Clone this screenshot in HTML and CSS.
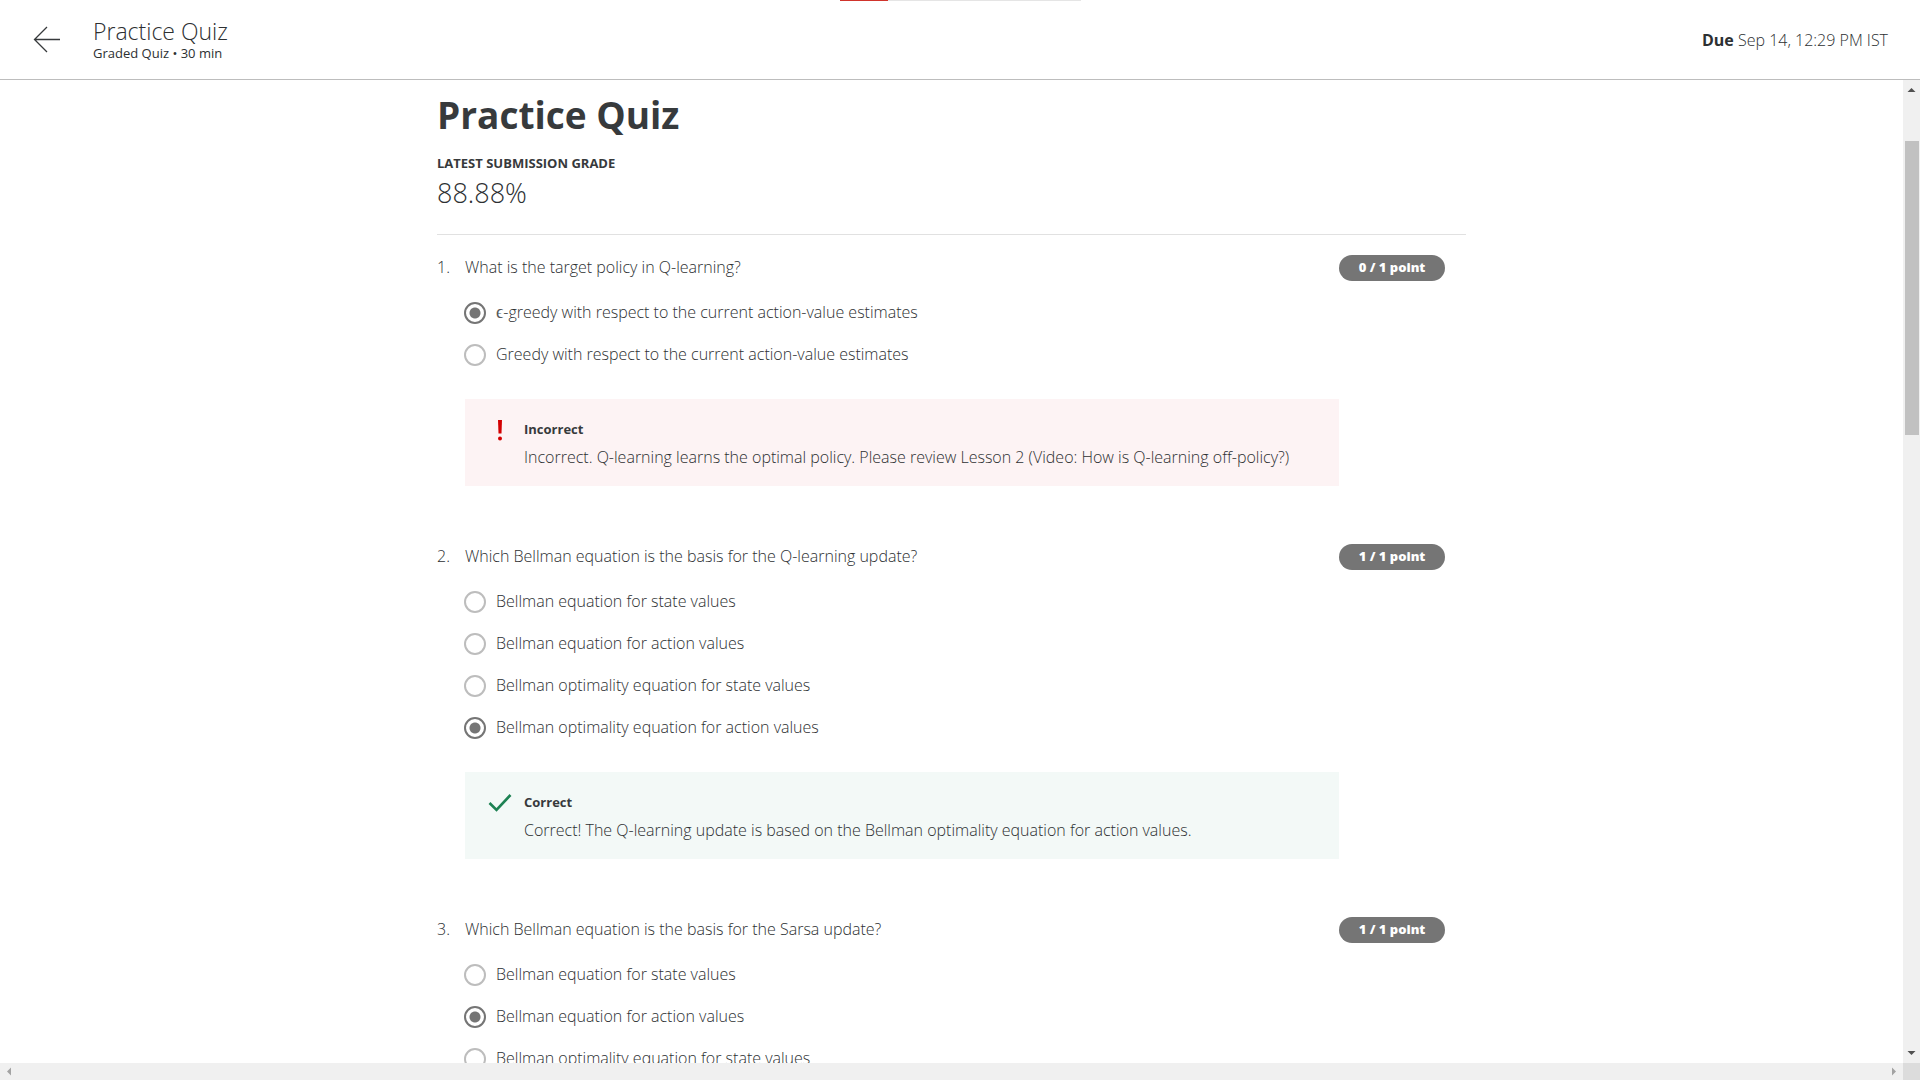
FILE: index.html
```html
<!DOCTYPE html>
<html lang="en">
<head>
<meta charset="utf-8">
<title>Practice Quiz</title>
<link rel="stylesheet" href="styles.css">
</head>
<body>
<div class="app">
  <header class="topbar">
    <a class="back" href="#" aria-label="Back">
      <svg width="28" height="28" viewBox="0 0 28 28" fill="none" stroke="#373a3c" stroke-width="1.3"><path d="M27 13.5H1.5M14 1L1.5 13.5L14 26"/></svg>
    </a>
    <div class="heading">
      <div class="name">Practice Quiz</div>
      <div class="kind">Graded Quiz • 30 min</div>
    </div>
    <div class="due"><strong>Due</strong> Sep 14, 12:29 PM IST</div>
    <div class="progress"><div class="progress-fill"></div></div>
  </header>

  <main class="pane">
    <div class="content">
      <h1>Practice Quiz</h1>
      <h2>Latest Submission Grade</h2>
      <p class="grade">88.88%</p>

      <section class="question">
        <div class="number">1.</div>
        <div class="body">
          <p class="prompt" id="q1">What is the target policy in Q-learning?</p>
          <div class="options" role="radiogroup" aria-labelledby="q1">
            <label class="option"><input type="radio" name="q1" checked><span><span class="math">ϵ</span>-greedy with respect to the current action-value estimates</span></label>
            <label class="option"><input type="radio" name="q1"><span>Greedy with respect to the current action-value estimates</span></label>
          </div>
          <div class="feedback incorrect">
            <svg class="mark" width="24" height="24" viewBox="0 0 24 24" fill="#d30001"><path d="M10 1h4l-.5 13.500h-3z"/><circle cx="12" cy="19.500" r="2"/></svg>
            <div>
              <h3>Incorrect</h3>
              <p>Incorrect. Q-learning learns the optimal policy. Please review Lesson 2 (Video: How is Q-learning off-policy?)</p>
            </div>
          </div>
        </div>
        <div class="points">0 / 1 point</div>
      </section>

      <section class="question">
        <div class="number">2.</div>
        <div class="body">
          <p class="prompt" id="q2">Which Bellman equation is the basis for the Q-learning update?</p>
          <div class="options" role="radiogroup" aria-labelledby="q2">
            <label class="option"><input type="radio" name="q2"><span>Bellman equation for state values</span></label>
            <label class="option"><input type="radio" name="q2"><span>Bellman equation for action values</span></label>
            <label class="option"><input type="radio" name="q2"><span>Bellman optimality equation for state values</span></label>
            <label class="option"><input type="radio" name="q2" checked><span>Bellman optimality equation for action values</span></label>
          </div>
          <div class="feedback correct">
            <svg class="mark" width="24" height="24" viewBox="0 0 24 24" fill="none" stroke="#1d8253" stroke-width="2.600"><path d="M1.500 11L8.500 18L22.500 3"/></svg>
            <div>
              <h3>Correct</h3>
              <p>Correct! The Q-learning update is based on the Bellman optimality equation for action values.</p>
            </div>
          </div>
        </div>
        <div class="points">1 / 1 point</div>
      </section>

      <section class="question">
        <div class="number">3.</div>
        <div class="body">
          <p class="prompt" id="q3">Which Bellman equation is the basis for the Sarsa update?</p>
          <div class="options" role="radiogroup" aria-labelledby="q3">
            <label class="option"><input type="radio" name="q3"><span>Bellman equation for state values</span></label>
            <label class="option"><input type="radio" name="q3" checked><span>Bellman equation for action values</span></label>
            <label class="option"><input type="radio" name="q3"><span>Bellman optimality equation for state values</span></label>
          </div>
        </div>
        <div class="points">1 / 1 point</div>
      </section>
    </div>
  </main>

  <div class="vbar" aria-hidden="true">
    <svg class="arrow" width="17" height="17" viewBox="0 0 17 17" fill="#505050"><path d="M4.500 12L8.500 8L12.500 12z"/></svg>
    <div class="track"><div class="thumb"></div></div>
    <svg class="arrow" width="17" height="17" viewBox="0 0 17 17" fill="#505050"><path d="M4.500 5L8.500 9L12.500 5z"/></svg>
  </div>
  <div class="hbar" aria-hidden="true">
    <svg class="arrow" width="17" height="17" viewBox="0 0 17 17" fill="#a3a3a3"><path d="M11 4.500L7 8.500L11 12.500z"/></svg>
    <svg class="arrow" width="17" height="17" viewBox="0 0 17 17" fill="#a3a3a3"><path d="M6 4.500L10 8.500L6 12.500z"/></svg>
  </div>
  <div class="corner"></div>
</div>
</body>
</html>
```
FILE: styles.css
```css
* {
  box-sizing: border-box;
}

body,
h1,
h2,
h3,
p {
  margin: 0;
}

body {
  font: 300 16px/24px "Open Sans", "Noto Sans", sans-serif;
  color: #2d3032;
  background: #fff;
}

.app {
  display: grid;
  grid-template: auto minmax(0, 1fr) 17px / minmax(0, 1fr) 17px;
  height: 100vh;
}

/* Header */
.topbar {
  grid-column: 1 / -1;
  position: relative;
  display: flex;
  align-items: center;
  height: 80px;
  padding: 0 32px 0 33px;
  border-bottom: 1px solid #bdbdbd;
}

.back {
  display: flex;
}

.heading {
  flex: 1;
  margin-left: 32px;
}

.name {
  font-size: 23px;
  line-height: 26px;
}

.kind {
  font-size: 13px;
  font-weight: 400;
  line-height: 18px;
}

.due strong {
  font-weight: 700;
}

.progress {
  position: absolute;
  top: 0;
  left: 50%;
  width: 241px;
  height: 1px;
  margin-left: -120px;
  background: #e5e5e5;
}

.progress-fill {
  width: 20%;
  height: 1px;
  background: #d0342c;
}

/* Quiz */
.pane {
  overflow: auto;
  scrollbar-width: none;
}

.content {
  max-width: 1029px;
  margin: 0 auto;
  padding-top: 7px;
}

h1 {
  color: #373a3c;
  font-size: 37px;
  font-weight: 700;
  line-height: 56px;
}

h2 {
  margin-top: 11px;
  color: #373a3c;
  font-size: 13px;
  font-weight: 700;
  line-height: 18px;
  text-transform: uppercase;
}

.grade {
  padding: 3px 0 23px;
  border-bottom: 1px solid #e1e1e1;
  font-size: 27px;
  line-height: 36px;
}

.question {
  display: flex;
  margin: 20px 21px 0 0;
}

.question + .question {
  margin-top: 58px;
}

.number {
  flex: 0 0 28px;
}

.body {
  flex: 1;
}

.options {
  padding: 12px 0 24px;
}

.option {
  display: flex;
  align-items: center;
  gap: 10px;
  width: fit-content;
  height: 42px;
}

.option input {
  appearance: none;
  width: 22px;
  height: 22px;
  margin: 2px 0 0 -1px;
  border: 2px solid #bdbdbd;
  border-radius: 50%;
}

.option input:checked {
  border-color: #757575;
  background: radial-gradient(circle, #757575 5px, transparent 6px);
}

.math {
  color: #55585a;
  font-family: "Liberation Serif", serif;
  font-size: 18px;
  font-weight: 400;
  line-height: 1;
}

.feedback {
  display: flex;
  gap: 12px;
  padding: 20px 24px 17px 23px;
}

.feedback h3 {
  color: #373a3c;
  font-size: 13px;
  font-weight: 700;
  line-height: 20px;
}

.feedback p {
  padding-top: 6px;
}

.incorrect {
  background: #fdf3f4;
}

.correct {
  background: #f3f9f7;
}

.points {
  flex: 0 0 106px;
  height: 26px;
  border-radius: 13px;
  background: #757575;
  color: #fff;
  font-size: 13px;
  font-weight: 800;
  line-height: 25px;
  text-align: center;
}

/* Scroll bars */
.vbar,
.hbar {
  display: flex;
  background: #f0f0f0;
}

.vbar {
  flex-direction: column;
}

.hbar {
  justify-content: space-between;
}

.arrow {
  flex: none;
}

.track {
  flex: 1;
  display: flex;
  flex-direction: column;
  padding: 44px 1px 0 2px;
}

.thumb {
  flex: 0 0 294px;
  background: #c1c1c1;
}

.corner {
  background: #dcdcdc;
}
```
